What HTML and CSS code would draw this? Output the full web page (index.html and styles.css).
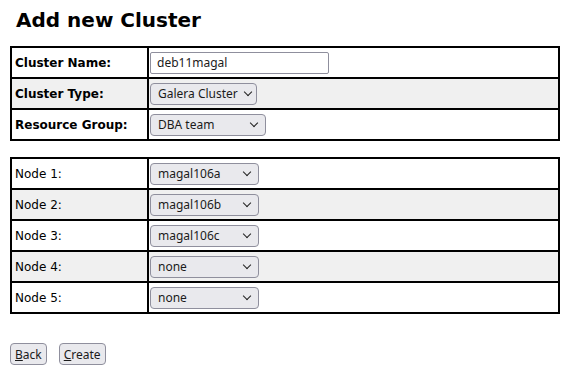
FILE: index.html
```html
<!DOCTYPE html>
<html lang="en">
<head>
    <meta charset="UTF-8">
    <title>Add new Cluster</title>
    <link rel="stylesheet" href="styles.css">
</head>
<body>
    <h2>Add new Cluster</h2>
    <form>
        <table class="form-table">
            <tr>
                <th>Cluster Name:</th>
                <td><input type="text" class="name-input" value="deb11magal"></td>
            </tr>
            <tr>
                <th>Cluster Type:</th>
                <td>
                    <span class="select-wrap tight">
                        <select class="type-select">
                            <option>Galera Cluster</option>
                        </select>
                    </span>
                </td>
            </tr>
            <tr>
                <th>Resource Group:</th>
                <td>
                    <span class="select-wrap">
                        <select class="group-select">
                            <option>DBA team</option>
                        </select>
                    </span>
                </td>
            </tr>
        </table>

        <table class="form-table nodes">
            <tr>
                <td class="label">Node 1:</td>
                <td><span class="select-wrap"><select class="node-select"><option>magal106a</option></select></span></td>
            </tr>
            <tr>
                <td class="label">Node 2:</td>
                <td><span class="select-wrap"><select class="node-select"><option>magal106b</option></select></span></td>
            </tr>
            <tr>
                <td class="label">Node 3:</td>
                <td><span class="select-wrap"><select class="node-select"><option>magal106c</option></select></span></td>
            </tr>
            <tr>
                <td class="label">Node 4:</td>
                <td><span class="select-wrap"><select class="node-select"><option>none</option></select></span></td>
            </tr>
            <tr>
                <td class="label">Node 5:</td>
                <td><span class="select-wrap"><select class="node-select"><option>none</option></select></span></td>
            </tr>
        </table>

        <div class="actions">
            <button type="button"><u>B</u>ack</button>
            <button type="button"><u>C</u>reate</button>
        </div>
    </form>
</body>
</html>
```

FILE: styles.css
```css
body {
    font-family: "DejaVu Sans", Verdana, sans-serif;
    font-size: 12px;
    margin: 0 10px;
    color: #000;
    background: #fff;
}
h2 {
    font-size: 20px;
    line-height: 24px;
    margin: 8px 0 14px 6px;
}
.form-table {
    width: 550px;
    border-collapse: collapse;
    border: 2px solid #000;
    margin-bottom: 16px;
}
.form-table th,
.form-table td {
    border: 2px solid #000;
    padding: 0 0 0 1px;
    height: 29px;
    text-align: left;
    vertical-align: middle;
}
.form-table th,
.form-table .label {
    width: 132px;
    padding-left: 3px;
}
.form-table tr:nth-child(even) {
    background-color: #f0f0f0;
}
input, select, button {
    font-family: "Noto Sans", "Open Sans", sans-serif;
    font-size: 12px;
    color: #1b1b1b;
}
.name-input {
    width: 179px;
    height: 22px;
    box-sizing: border-box;
    padding: 0 6px;
    border: 1px solid #8f8f9d;
    border-radius: 2px;
    background: #fff;
    vertical-align: middle;
}
.select-wrap {
    position: relative;
    display: inline-block;
    vertical-align: middle;
}
.select-wrap::after {
    content: "";
    position: absolute;
    right: 9px;
    top: 6px;
    width: 5px;
    height: 5px;
    border-right: 1.5px solid #222;
    border-bottom: 1.5px solid #222;
    transform: rotate(45deg);
    pointer-events: none;
}
.select-wrap.tight::after {
    right: 6px;
}
select {
    appearance: none;
    -webkit-appearance: none;
    display: block;
    height: 22px;
    box-sizing: border-box;
    padding: 0 16px 0 7px;
    border: 1px solid #8f8f9d;
    border-radius: 4px;
    background-color: #e9e9ed;
}
.type-select {
    width: 107px;
    padding-right: 12px;
}
.group-select {
    width: 116px;
}
.node-select {
    width: 109px;
}
.actions {
    margin-top: 29px;
    display: flex;
    gap: 12px;
}
button {
    height: 22px;
    box-sizing: border-box;
    padding: 0 4px;
    border: 1px solid #8f8f9d;
    border-radius: 4px;
    background-color: #e9e9ed;
}
```
